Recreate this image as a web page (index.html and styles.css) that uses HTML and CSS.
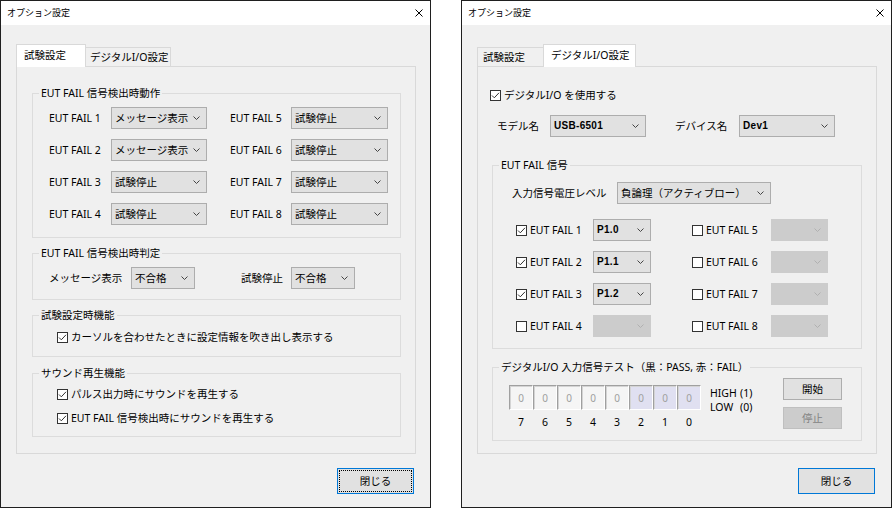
FILE: index.html
```html
<!DOCTYPE html>
<html lang="ja">
<head>
<meta charset="utf-8">
<title>オプション設定</title>
<link rel="stylesheet" href="styles.css">
</head>
<body>
<div class="desk">

  <!-- Window 1 -->
  <div class="win">
    <div class="titlebar">
      <span class="title">オプション設定</span>
      <svg class="close" viewBox="0 0 8 8"><path d="M0.5 0.5L7.5 7.5M7.5 0.5L0.5 7.5"/></svg>
    </div>
    <div class="client">
      <div class="tabs">
        <div class="tab active w1a">試験設定</div>
        <div class="tab w1b">デジタルI/O設定</div>
      </div>
      <div class="panel">
        <fieldset class="group g-action">
          <legend>EUT FAIL 信号検出時動作</legend>
          <div class="grid8">
            <span class="lbl">EUT FAIL 1</span>
            <div class="combo"><span>メッセージ表示</span><svg class="chev" viewBox="0 0 7 4"><polyline points="0.5,0.5 3.5,3.5 6.5,0.5"/></svg></div>
            <span class="lbl lbl2">EUT FAIL 5</span>
            <div class="combo"><span>試験停止</span><svg class="chev" viewBox="0 0 7 4"><polyline points="0.5,0.5 3.5,3.5 6.5,0.5"/></svg></div>

            <span class="lbl">EUT FAIL 2</span>
            <div class="combo"><span>メッセージ表示</span><svg class="chev" viewBox="0 0 7 4"><polyline points="0.5,0.5 3.5,3.5 6.5,0.5"/></svg></div>
            <span class="lbl lbl2">EUT FAIL 6</span>
            <div class="combo"><span>試験停止</span><svg class="chev" viewBox="0 0 7 4"><polyline points="0.5,0.5 3.5,3.5 6.5,0.5"/></svg></div>

            <span class="lbl">EUT FAIL 3</span>
            <div class="combo"><span>試験停止</span><svg class="chev" viewBox="0 0 7 4"><polyline points="0.5,0.5 3.5,3.5 6.5,0.5"/></svg></div>
            <span class="lbl lbl2">EUT FAIL 7</span>
            <div class="combo"><span>試験停止</span><svg class="chev" viewBox="0 0 7 4"><polyline points="0.5,0.5 3.5,3.5 6.5,0.5"/></svg></div>

            <span class="lbl">EUT FAIL 4</span>
            <div class="combo"><span>試験停止</span><svg class="chev" viewBox="0 0 7 4"><polyline points="0.5,0.5 3.5,3.5 6.5,0.5"/></svg></div>
            <span class="lbl lbl2">EUT FAIL 8</span>
            <div class="combo"><span>試験停止</span><svg class="chev" viewBox="0 0 7 4"><polyline points="0.5,0.5 3.5,3.5 6.5,0.5"/></svg></div>
          </div>
        </fieldset>

        <fieldset class="group g-judge">
          <legend>EUT FAIL 信号検出時判定</legend>
          <div class="judge">
            <span class="jl1">メッセージ表示</span>
            <div class="combo small"><span>不合格</span><svg class="chev" viewBox="0 0 7 4"><polyline points="0.5,0.5 3.5,3.5 6.5,0.5"/></svg></div>
            <span class="jl2">試験停止</span>
            <div class="combo small"><span>不合格</span><svg class="chev" viewBox="0 0 7 4"><polyline points="0.5,0.5 3.5,3.5 6.5,0.5"/></svg></div>
          </div>
        </fieldset>

        <fieldset class="group g-func">
          <legend>試験設定時機能</legend>
          <div class="checks">
            <label class="cbrow"><svg class="cb" viewBox="0 0 11 11"><rect x="0.5" y="0.5" width="10" height="10"/><polyline points="2,5.5 4.3,7.8 9,2.8"/></svg><span>カーソルを合わせたときに設定情報を吹き出し表示する</span></label>
          </div>
        </fieldset>

        <fieldset class="group g-sound">
          <legend>サウンド再生機能</legend>
          <div class="checks">
            <label class="cbrow"><svg class="cb" viewBox="0 0 11 11"><rect x="0.5" y="0.5" width="10" height="10"/><polyline points="2,5.5 4.3,7.8 9,2.8"/></svg><span>パルス出力時にサウンドを再生する</span></label>
            <label class="cbrow"><svg class="cb" viewBox="0 0 11 11"><rect x="0.5" y="0.5" width="10" height="10"/><polyline points="2,5.5 4.3,7.8 9,2.8"/></svg><span>EUT FAIL 信号検出時にサウンドを再生する</span></label>
          </div>
        </fieldset>
      </div>
      <div class="footer">
        <button class="btn default focus">閉じる</button>
      </div>
    </div>
  </div>

  <!-- Window 2 -->
  <div class="win">
    <div class="titlebar">
      <span class="title">オプション設定</span>
      <svg class="close" viewBox="0 0 8 8"><path d="M0.5 0.5L7.5 7.5M7.5 0.5L0.5 7.5"/></svg>
    </div>
    <div class="client">
      <div class="tabs">
        <div class="tab w2a">試験設定</div>
        <div class="tab active w2b">デジタルI/O設定</div>
      </div>
      <div class="panel panel2">
        <label class="cbrow use"><svg class="cb" viewBox="0 0 11 11"><rect x="0.5" y="0.5" width="10" height="10"/><polyline points="2,5.5 4.3,7.8 9,2.8"/></svg><span>デジタルI/O を使用する</span></label>

        <div class="devrow">
          <span class="dl1">モデル名</span>
          <div class="combo mid"><span class="mono">USB-6501</span><svg class="chev" viewBox="0 0 7 4"><polyline points="0.5,0.5 3.5,3.5 6.5,0.5"/></svg></div>
          <span class="dl2">デバイス名</span>
          <div class="combo mid"><span class="mono">Dev1</span><svg class="chev" viewBox="0 0 7 4"><polyline points="0.5,0.5 3.5,3.5 6.5,0.5"/></svg></div>
        </div>

        <fieldset class="group g-sig">
          <legend>EUT FAIL 信号</legend>
          <div class="sig">
            <div class="vrow">
              <span class="vl">入力信号電圧レベル</span>
              <div class="combo wide"><span>負論理（アクティブロー）</span><svg class="chev" viewBox="0 0 7 4"><polyline points="0.5,0.5 3.5,3.5 6.5,0.5"/></svg></div>
            </div>
            <div class="pins">
              <label class="cbrow pc1"><svg class="cb" viewBox="0 0 11 11"><rect x="0.5" y="0.5" width="10" height="10"/><polyline points="2,5.5 4.3,7.8 9,2.8"/></svg><span>EUT FAIL 1</span></label>
              <div class="combo pin"><span class="mono">P1.0</span><svg class="chev" viewBox="0 0 7 4"><polyline points="0.5,0.5 3.5,3.5 6.5,0.5"/></svg></div>
              <label class="cbrow pc2"><svg class="cb off" viewBox="0 0 11 11"><rect x="0.5" y="0.5" width="10" height="10"/></svg><span>EUT FAIL 5</span></label>
              <div class="combo pin disabled"><span></span><svg class="chev" viewBox="0 0 7 4"><polyline points="0.5,0.5 3.5,3.5 6.5,0.5"/></svg></div>

              <label class="cbrow pc1"><svg class="cb" viewBox="0 0 11 11"><rect x="0.5" y="0.5" width="10" height="10"/><polyline points="2,5.5 4.3,7.8 9,2.8"/></svg><span>EUT FAIL 2</span></label>
              <div class="combo pin"><span class="mono">P1.1</span><svg class="chev" viewBox="0 0 7 4"><polyline points="0.5,0.5 3.5,3.5 6.5,0.5"/></svg></div>
              <label class="cbrow pc2"><svg class="cb off" viewBox="0 0 11 11"><rect x="0.5" y="0.5" width="10" height="10"/></svg><span>EUT FAIL 6</span></label>
              <div class="combo pin disabled"><span></span><svg class="chev" viewBox="0 0 7 4"><polyline points="0.5,0.5 3.5,3.5 6.5,0.5"/></svg></div>

              <label class="cbrow pc1"><svg class="cb" viewBox="0 0 11 11"><rect x="0.5" y="0.5" width="10" height="10"/><polyline points="2,5.5 4.3,7.8 9,2.8"/></svg><span>EUT FAIL 3</span></label>
              <div class="combo pin"><span class="mono">P1.2</span><svg class="chev" viewBox="0 0 7 4"><polyline points="0.5,0.5 3.5,3.5 6.5,0.5"/></svg></div>
              <label class="cbrow pc2"><svg class="cb off" viewBox="0 0 11 11"><rect x="0.5" y="0.5" width="10" height="10"/></svg><span>EUT FAIL 7</span></label>
              <div class="combo pin disabled"><span></span><svg class="chev" viewBox="0 0 7 4"><polyline points="0.5,0.5 3.5,3.5 6.5,0.5"/></svg></div>

              <label class="cbrow pc1"><svg class="cb off" viewBox="0 0 11 11"><rect x="0.5" y="0.5" width="10" height="10"/></svg><span>EUT FAIL 4</span></label>
              <div class="combo pin disabled"><span></span><svg class="chev" viewBox="0 0 7 4"><polyline points="0.5,0.5 3.5,3.5 6.5,0.5"/></svg></div>
              <label class="cbrow pc2"><svg class="cb off" viewBox="0 0 11 11"><rect x="0.5" y="0.5" width="10" height="10"/></svg><span>EUT FAIL 8</span></label>
              <div class="combo pin disabled"><span></span><svg class="chev" viewBox="0 0 7 4"><polyline points="0.5,0.5 3.5,3.5 6.5,0.5"/></svg></div>
            </div>
          </div>
        </fieldset>

        <fieldset class="group g-test">
          <legend>デジタルI/O 入力信号テスト（黒：PASS, 赤：FAIL）</legend>
          <div class="test">
            <div class="bits">
              <div class="cells">
                <span class="bit">0</span><span class="bit">0</span><span class="bit">0</span><span class="bit">0</span><span class="bit">0</span><span class="bit on">0</span><span class="bit on">0</span><span class="bit on">0</span>
              </div>
              <div class="nums">
                <span>7</span><span>6</span><span>5</span><span>4</span><span>3</span><span>2</span><span>1</span><span>0</span>
              </div>
            </div>
            <div class="legend2">
              <span>HIGH</span><span>(1)</span>
              <span>LOW</span><span>(0)</span>
            </div>
            <div class="tbtns">
              <button class="btn sm">開始</button>
              <button class="btn sm dis">停止</button>
            </div>
          </div>
        </fieldset>
      </div>
      <div class="footer">
        <button class="btn default">閉じる</button>
      </div>
    </div>
  </div>

</div>
</body>
</html>
```

FILE: styles.css
```css
* { box-sizing: border-box; }

html, body {
  margin: 0;
  padding: 0;
}

body {
  width: 893px;
  height: 509px;
  overflow: hidden;
  background: #ffffff;
  font-family: "Noto Sans", "Noto Sans CJK JP", sans-serif;
  font-size: 10.5px;
  line-height: 14px;
  color: #000;
}

.desk {
  display: flex;
  gap: 30px;
}

.win {
  width: 431px;
  height: 508px;
  border: 1px solid #1f1f1f;
  background: #f0f0f0;
  display: flex;
  flex-direction: column;
}

.titlebar {
  height: 24px;
  background: #ffffff;
  display: flex;
  align-items: center;
  justify-content: space-between;
  padding: 0 7px 0 6px;
}

.title {
  font-size: 9px;
  line-height: 12px;
}

.close {
  width: 8px;
  height: 8px;
}
.close path {
  stroke: #000;
  stroke-width: 1;
  fill: none;
}

.client {
  flex: 1;
  padding: 19px 14px 0 15px;
  display: flex;
  flex-direction: column;
}

/* Tabs */
.tabs {
  display: flex;
  align-items: flex-end;
  height: 22px;
}

.tab {
  height: 19px;
  border: 1px solid #d9d9d9;
  border-bottom: none;
  background: #f0f0f0;
  line-height: 18px;
  padding-left: 4px;
  white-space: nowrap;
}

.tab.active {
  position: relative;
  z-index: 1;
  height: 23px;
  margin-bottom: -1px;
  background: #ffffff;
  line-height: 20px;
  padding-left: 7px;
}

.w1a { width: 70px; }
.w1b { width: 86px; margin-left: -1px; }
.w2a { width: 67px; padding-left: 5px; }
.w2b { width: 93px; margin-left: -1px; }

.panel {
  height: 388px;
  border: 1px solid #d9d9d9;
  padding: 19px 14px 0 15px;
  display: flex;
  flex-direction: column;
}

/* Group boxes */
.group {
  margin: 0;
  padding: 0;
  min-width: 0;
  border: 1px solid #dcdcdc;
}

.group legend {
  margin-left: 6px;
  padding: 0 2px;
  line-height: 14px;
}

.g-judge, .g-func {
  margin-top: 8px;
}
.g-sound {
  margin-top: 9px;
}

.grid8 {
  display: grid;
  grid-template-columns: 62px 96px 84px 97px;
  grid-auto-rows: 22px;
  row-gap: 10px;
  align-items: center;
  padding: 7px 0 12px 16px;
}

.lbl2 {
  padding-left: 23px;
}

/* Combo box */
.combo {
  height: 22px;
  background: #e1e1e1;
  border: 1px solid #adadad;
  display: flex;
  align-items: center;
  justify-content: space-between;
  padding: 0 6px 0 3px;
  white-space: nowrap;
}

.chev {
  width: 7px;
  height: 4px;
  flex: none;
}
.chev polyline {
  fill: none;
  stroke: #444;
  stroke-width: 1;
}

.combo.disabled {
  background: #cccccc;
  border-color: #cccccc;
}
.combo.disabled .chev polyline {
  stroke: #b0b0b0;
}

.mono {
  font-family: "Liberation Sans", "Noto Sans CJK JP", sans-serif;
  font-weight: bold;
  font-size: 10px;
  letter-spacing: 0.3px;
}

.judge {
  display: grid;
  grid-template-columns: 82px 64px 96px 64px;
  align-items: center;
  padding: 7px 0 10px 16px;
}

.jl2 {
  text-align: right;
  padding-right: 8px;
}

/* Checkboxes */
.checks {
  display: flex;
  flex-direction: column;
  gap: 10px;
  padding: 8px 0 12px 24px;
}

.g-sound .checks {
  gap: 10px;
  padding: 7px 0 11px 24px;
}

.cbrow {
  display: flex;
  align-items: center;
  gap: 3px;
  height: 14px;
  white-space: nowrap;
}

.cb {
  width: 11px;
  height: 11px;
  flex: none;
}
.cb rect {
  fill: #ffffff;
  stroke: #333333;
  stroke-width: 1;
}
.cb polyline {
  fill: none;
  stroke: #333333;
  stroke-width: 1;
}

/* Footer */
.footer {
  display: flex;
  justify-content: flex-end;
  padding: 14px 2px 0 0;
}

.btn {
  font-family: inherit;
  font-size: 10.5px;
  line-height: 14px;
  color: #000;
  background: #e1e1e1;
  border: 1px solid #adadad;
  padding: 0;
  margin: 0;
}

.btn.default {
  width: 77px;
  height: 26px;
  border-color: #0078d7;
}

.btn.focus {
  outline: 1px dotted #000;
  outline-offset: -3px;
}

/* Window 2 panel */
.panel2 {
  padding: 21px 14px 0 12px;
}

.use {
  margin-bottom: 13px;
}

.devrow {
  display: grid;
  grid-template-columns: 53px 96px 29px 64px 96px;
  align-items: center;
  padding-left: 7px;
}
.dl2 { grid-column: 4; }
.devrow > .combo:last-child { grid-column: 5; }

.g-sig {
  margin: 21px 0 0 2px;
}

.sig {
  padding: 10px 0 11px 0;
}

.vrow {
  display: flex;
  align-items: center;
  padding-left: 19px;
}
.vl {
  width: 105px;
}
.combo.wide {
  width: 154px;
}

.pins {
  display: grid;
  grid-template-columns: 77px 58px 41px 79px 57px;
  grid-auto-rows: 22px;
  row-gap: 10px;
  align-items: center;
  padding-left: 23px;
  margin-top: 15px;
}
.pc2 { grid-column: 4; }

.g-test {
  margin: 11px 0 0 2px;
}

.test {
  display: flex;
  align-items: flex-start;
  padding: 4px 19px 11px 16px;
}

.bits {
  margin-top: 7px;
}

.cells {
  display: flex;
}

.bit {
  width: 24px;
  height: 25px;
  background: #f5f5f5;
  border: 1px solid;
  border-color: #a0a0a0 #ffffff #ffffff #a0a0a0;
  box-shadow: inset 1px 1px 0 #d4d4d4;
  color: #a0a0a0;
  font-size: 10px;
  display: flex;
  align-items: center;
  justify-content: center;
}
.bit.on {
  background: #e0e0f1;
}

.nums {
  display: flex;
  margin-top: 5px;
}
.nums span {
  width: 24px;
  text-align: center;
}

.legend2 {
  display: grid;
  grid-template-columns: 30px auto;
  margin: 8px 0 0 9px;
}

.tbtns {
  margin-left: auto;
  display: flex;
  flex-direction: column;
  gap: 7px;
}

.btn.sm {
  width: 59px;
  height: 22px;
}

.btn.dis {
  background: #cccccc;
  border-color: #bfbfbf;
  color: #838383;
}
```
